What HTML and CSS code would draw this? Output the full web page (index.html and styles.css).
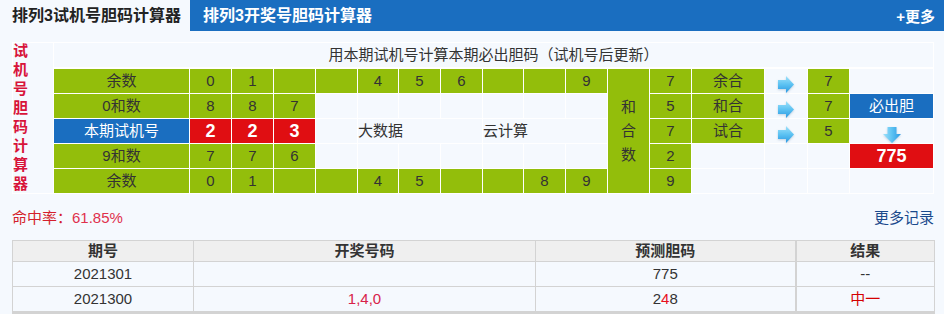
FILE: index.html
```html
<!DOCTYPE html>
<html lang="zh-CN">
<head>
<meta charset="utf-8">
<title>排列3试机号胆码计算器</title>
<link rel="stylesheet" href="styles.css">
</head>
<body>
<svg class="defs" width="0" height="0" aria-hidden="true">
  <defs>
    <linearGradient id="arrowGrad" x1="0" y1="0" x2="0" y2="1">
      <stop offset="0" stop-color="#9fe2fb"/>
      <stop offset="0.5" stop-color="#5cc2f2"/>
      <stop offset="1" stop-color="#2a98e2"/>
    </linearGradient>
    <linearGradient id="arrowGradH" x1="0" y1="0" x2="1" y2="0">
      <stop offset="0" stop-color="#9fe2fb"/>
      <stop offset="0.5" stop-color="#5cc2f2"/>
      <stop offset="1" stop-color="#2a98e2"/>
    </linearGradient>
  </defs>
</svg>

<div class="tabs">
  <div class="tab active">排列3试机号胆码计算器</div>
  <div class="tab">排列3开奖号胆码计算器</div>
  <a class="more" href="#">+更多</a>
</div>

<div class="calc">
  <div class="title"><span>试机号胆码计算器</span></div>
  <div class="head">用本期试机号计算本期必出胆码（试机号后更新）</div>
  <div class="sum g"><span>和合数</span></div>

  <!-- row 1 -->
  <div class="g">余数</div>
  <div class="g">0</div><div class="g">1</div><div class="g"></div><div class="g"></div>
  <div class="g">4</div><div class="g">5</div><div class="g">6</div><div class="g"></div><div class="g"></div><div class="g">9</div>
  <div class="g">7</div><div class="g">余合</div>
  <div class="arrow"><svg width="16" height="17" viewBox="0 0 16 17"><path d="M0 4h8V0l8 8.5L8 17v-4H0z" fill="url(#arrowGrad)"/></svg></div>
  <div class="g">7</div><div></div>

  <!-- row 2 -->
  <div class="g">0和数</div>
  <div class="g">8</div><div class="g">8</div><div class="g">7</div>
  <div></div><div></div><div></div><div></div><div></div><div></div><div></div>
  <div class="g">5</div><div class="g">和合</div>
  <div class="arrow"><svg width="16" height="17" viewBox="0 0 16 17"><path d="M0 4h8V0l8 8.5L8 17v-4H0z" fill="url(#arrowGrad)"/></svg></div>
  <div class="g">7</div><div class="blue">必出胆</div>

  <!-- row 3 -->
  <div class="blue">本期试机号</div>
  <div class="red">2</div><div class="red">2</div><div class="red">3</div>
  <div></div>
  <div class="left">大数据</div>
  <div class="left">云计算</div>
  <div class="g">7</div><div class="g">试合</div>
  <div class="arrow"><svg width="16" height="17" viewBox="0 0 16 17"><path d="M0 4h8V0l8 8.5L8 17v-4H0z" fill="url(#arrowGrad)"/></svg></div>
  <div class="g">5</div>
  <div class="arrow down"><svg width="18" height="16" viewBox="0 0 18 16"><path d="M4.5 0h9v7H18l-9 9-9-9h4.5z" fill="url(#arrowGradH)"/></svg></div>

  <!-- row 4 -->
  <div class="g">9和数</div>
  <div class="g">7</div><div class="g">7</div><div class="g">6</div>
  <div></div><div></div><div></div><div></div><div></div><div></div><div></div>
  <div class="g">2</div><div></div><div></div><div></div><div class="red">775</div>

  <!-- row 5 -->
  <div class="g">余数</div>
  <div class="g">0</div><div class="g">1</div><div class="g"></div><div class="g"></div>
  <div class="g">4</div><div class="g">5</div><div class="g"></div><div class="g"></div><div class="g">8</div><div class="g">9</div>
  <div class="g">9</div><div></div><div></div><div></div><div></div>
</div>

<div class="stats">
  <span class="rate">命中率：<em>61.85%</em></span>
  <a class="more-rec" href="#">更多记录</a>
</div>

<table class="records">
  <colgroup>
    <col class="c1"><col class="c2"><col class="c3"><col class="c4">
  </colgroup>
  <thead>
    <tr><th>期号</th><th>开奖号码</th><th>预测胆码</th><th class="res">结果</th></tr>
  </thead>
  <tbody>
    <tr><td>2021301</td><td></td><td>775</td><td class="res">--</td></tr>
    <tr class="last"><td>2021300</td><td class="hit">1,4,0</td><td>2<span class="hitnum">4</span>8</td><td class="res win">中一</td></tr>
  </tbody>
</table>
</body>
</html>
```

FILE: styles.css
```css
body {
  margin: 0;
  background: #f5f9fe;
  font-family: "Liberation Sans", "Noto Sans CJK SC", sans-serif;
  font-size: 15px;
  color: #333;
}

.defs {
  position: absolute;
  width: 0;
  height: 0;
}

/* tab bar */
.tabs {
  display: flex;
  height: 31px;
  background: #1a6ec0;
}

.tab {
  display: flex;
  align-items: center;
  padding: 0 13px;
  font-size: 16px;
  font-weight: bold;
  color: #fff;
  line-height: 20px;
  white-space: nowrap;
}

.tab.active {
  flex: 0 0 190px;
  box-sizing: border-box;
  padding: 0 0 0 12px;
  background: #f5f9fe;
  color: #222;
}

.more {
  margin-left: auto;
  display: flex;
  align-items: center;
  padding-right: 9px;
  font-size: 15px;
  font-weight: bold;
  color: #fff;
  text-decoration: none;
  white-space: nowrap;
}

/* calculator grid */
.calc {
  margin: 11px 0 0 12px;
  display: grid;
  width: max-content;
  grid-template-columns: 40px 135px 41px 41px 41px 41px 40px 41px 41px 40px 41px 41px 41px 41px 72px 42px 41px 83px;
  grid-template-rows: 25px repeat(5, 24px);
  gap: 1px;
  padding: 1px;
  background: #fff;
}

.calc > div {
  display: flex;
  align-items: center;
  justify-content: center;
  background: #f5f9fe;
  line-height: 20px;
  color: #333;
}

.calc > .g {
  background: #93be0b;
}

.calc > .blue {
  background: #1a6ec0;
  color: #fff;
}

.calc > .red {
  background: #e00e12;
  color: #fff;
  font-size: 18px;
  font-weight: bold;
}

.calc > .title {
  grid-column: 1;
  grid-row: 1 / span 6;
  align-items: flex-start;
  justify-content: flex-start;
}

.title span {
  width: 1em;
  margin-top: -2px;
  font-size: 15px;
  font-weight: bold;
  line-height: 19px;
  color: #d8143a;
  word-break: break-all;
}

.calc > .head {
  grid-column: 2 / -1;
  grid-row: 1;
  box-sizing: border-box;
  border-bottom: 1px solid #fff;
}

.calc > .sum {
  grid-column: 13;
  grid-row: 2 / span 5;
}

.sum span {
  width: 1em;
  line-height: 24px;
  word-break: break-all;
}

.calc > .left {
  grid-column: span 3;
  justify-content: flex-start;
}

.calc > .arrow {
  align-items: flex-end;
}

.arrow svg {
  display: block;
  filter: drop-shadow(0 1px 1px rgba(40, 90, 140, 0.25));
}

/* stats line */
.stats {
  display: flex;
  justify-content: space-between;
  width: 922px;
  margin: 14px 0 0 12px;
  line-height: 20px;
}

.rate {
  color: #d41f2c;
}

.rate em {
  font-style: normal;
  color: #e0304c;
}

.more-rec {
  color: #1b4a8c;
  text-decoration: none;
}

/* records table */
.records {
  margin: 12px 0 0 12px;
  width: 922px;
  border-collapse: collapse;
  table-layout: fixed;
}

.c1 { width: 181px; }
.c2 { width: 342px; }
.c3 { width: 260px; }
.c4 { width: 139px; }

.records th,
.records td {
  border: 1px solid #d3d3d3;
  padding: 0;
  text-align: center;
}

.records th {
  background: #efefef;
  line-height: 20px;
  font-weight: bold;
  color: #333;
}

.records td {
  line-height: 24px;
  color: #333;
}

.records .res {
  border-left-width: 2px;
}

.records .last td {
  border-bottom-width: 3px;
}

.records .hit {
  color: #d8234a;
}

.records .hitnum {
  color: #e8101e;
}

.records .win {
  color: #d40000;
}
```
